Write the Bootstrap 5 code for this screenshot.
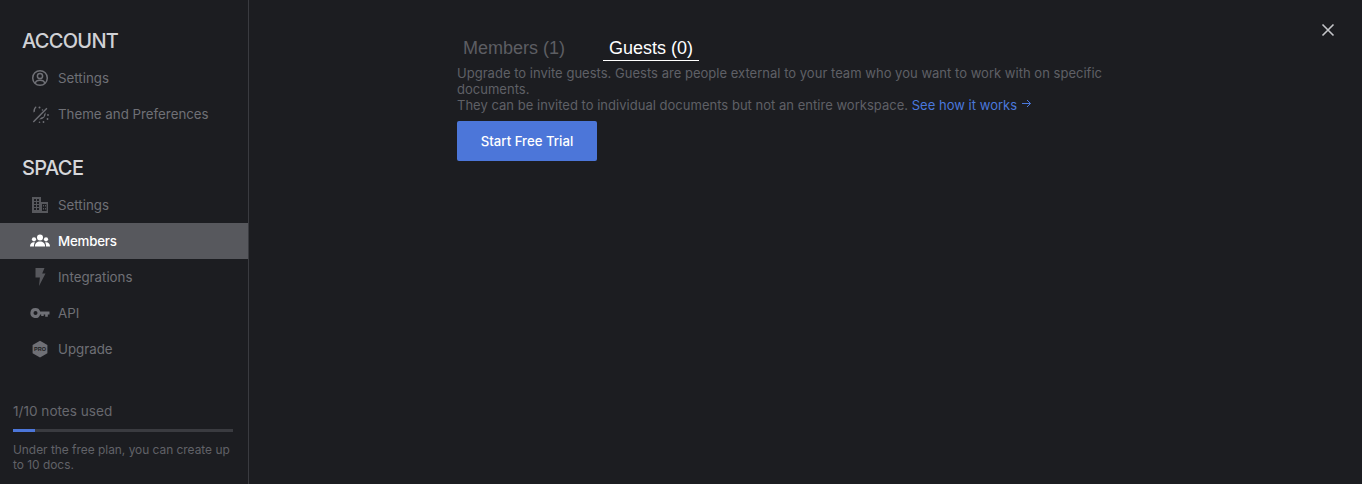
<!DOCTYPE html>
<html lang="en">
<head>
  <meta charset="UTF-8" />
  <meta name="viewport" content="width=device-width, initial-scale=1.0"/>
  <title>Members</title>
  <link href="https://cdn.jsdelivr.net/npm/bootstrap@5.3.0/dist/css/bootstrap.min.css" rel="stylesheet">
  <style>
    html, body { height: 100%; }
    body { background: #1c1d21; font-family: "Inter", "Liberation Sans", sans-serif; overflow: hidden; }
    .shell { height: 484px; }
    .side { width: 249px; flex: none; border-right: 1px solid #3a3b40; height: 484px; padding-top: 28px; }
    .side-title { font-size: 20px; line-height: 26px; font-weight: 500; color: #d0d1d5; padding-left: 22px; margin: 0 0 6px; letter-spacing: -0.7px; }
    .side-title.second { color: #d6d7da; margin-top: 23px; letter-spacing: -0.6px; }
    .side-link { height: 36px; padding-left: 30px; gap: 8px; font-size: 13.3px; color: #6f7076; text-decoration: none; }
    .side-link span { padding-top: 1px; }
    .side-link svg { width: 20px; height: 20px; flex: none; }
    .side-link.active { background: #57585d; color: #fff; font-weight: 500; letter-spacing: -0.2px; }
    .side-foot { margin-top: auto; padding: 0 15px 12px 13px; }
    .used { font-size: 13.6px; line-height: 18px; color: #67686e; margin-bottom: 9px; }
    .used-track { height: 3px; background: #3a3b40; margin-bottom: 10px; }
    .used-fill { height: 3px; background: #4c76d9; }
    .used-note { font-size: 11.9px; line-height: 15px; color: #616268; margin-right: -6px; }
    .pane { padding: 36px 0 0 208px; position: relative; }
    .tabbar { gap: 26px; margin-bottom: 5px; }
    .tab-item { font-family: "Liberation Sans", sans-serif; font-size: 18px; line-height: 24px; padding: 0 6px; color: #5d5e63; }
    .tab-item.active { color: #fff; box-shadow: 0 1px 0 #fff; margin-left: 6px; }
    .guest-text { width: 660px; font-size: 13px; line-height: 16px; color: #5f6066; margin: 0 0 8px; letter-spacing: 0.02px; }
    .guest-text a { color: #4a78dd; text-decoration: none; }
    .trial-btn { width: 140px; height: 40px; background: #4c76d9; color: #fff; font-size: 13.2px; font-weight: 500; border: 0; border-radius: 2px; padding: 1px 0 0; }
    .close-x { position: absolute; top: 23px; right: 27px; width: 14px; height: 14px; }
  </style>
</head>
<body>
  <div class="shell d-flex">
    <!-- Sidebar -->
    <nav class="side d-flex flex-column">
      <h5 class="side-title">ACCOUNT</h5>
      <a href="#" class="side-link d-flex align-items-center">
        <svg viewBox="0 0 20 20" fill="none" stroke="#6f7076" stroke-width="1.5"><circle cx="10" cy="10" r="7.3"/><circle cx="10" cy="8" r="2.6"/><path d="M5.2 15.2c.6-2 2-2.9 4.8-2.9s4.2.9 4.8 2.9"/></svg>
        <span>Settings</span>
      </a>
      <a href="#" class="side-link d-flex align-items-center">
        <svg viewBox="0 0 20 20" fill="#6f7076" stroke="none"><path d="M6.500 3.200a5 5 0 0 0-1.700 4.600l-1.300.8a6.600 6.600 0 0 1 2.400-6.300z"/><path d="M2.800 17.400 16.400 3.800l1 1L3.800 18.400z"/><path d="M15.600 8.200a6.200 6.200 0 0 1-6.400 7.300l2-2 2.400-.8.600-2.500z"/><circle cx="9.500" cy="3.500" r="1"/><circle cx="12.500" cy="6" r=".8"/><circle cx="18" cy="11" r=".9"/><circle cx="17.500" cy="15" r=".9"/><circle cx="13.500" cy="18" r=".9"/><circle cx="9.500" cy="18.200" r=".8"/></svg>
        <span>Theme and Preferences</span>
      </a>
      <h5 class="side-title second">SPACE</h5>
      <a href="#" class="side-link d-flex align-items-center">
        <svg viewBox="0 0 20 20" fill="#57585d"><path fill-rule="evenodd" d="M2 2h9v5h7v11H2zM4 4v2h2V4zm3 0v2h2V4zM4 7v2h2V7zm3 0v2h2V7zm-3 3v2h2v-2zm3 0v2h2v-2zm-3 3v2h2v-2zm3 0v2h2v-2zm5-4v7h4.600V9zm1 1h1v1.500h-1zm2 0h1v1.500h-1zm-2 3h1v1.500h-1zm2 0h1v1.500h-1z"/></svg>
        <span>Settings</span>
      </a>
      <a href="#" class="side-link active d-flex align-items-center">
        <svg viewBox="0 0 20 20" fill="#fff"><circle cx="10" cy="6.500" r="3"/><circle cx="4" cy="8.300" r="2.100"/><circle cx="16" cy="8.300" r="2.100"/><path d="M4.900 15.500c0-3.200 2.200-5 5.100-5s5.100 1.800 5.100 5z"/><path d="M0 15.500c0-2.500 1.400-4.200 3.800-4.200.4 0 .8 0 1.100.1-.7 1-1 2.400-1 4.100zM20 15.500c0-2.500-1.400-4.200-3.800-4.200-.4 0-.8 0-1.100.1.700 1 1 2.400 1 4.100z"/></svg>
        <span>Members</span>
      </a>
      <a href="#" class="side-link d-flex align-items-center">
        <svg viewBox="0 0 20 20" fill="#57585d"><path d="M5.500 1h9l-2.300 5.500h3.300L9 19l.9-8.500H5.500z"/></svg>
        <span>Integrations</span>
      </a>
      <a href="#" class="side-link d-flex align-items-center">
        <svg viewBox="0 0 20 20" fill="#6f7076"><path fill-rule="evenodd" d="M5.500 5a5 5 0 0 1 4.700 3.400h9.300v3h-1.700v2.300h-2.600v-2.300h-1.500v1.500h-2.500v-1.500h-1A5 5 0 1 1 5.500 5zm0 3a2 2 0 1 0 0 4 2 2 0 0 0 0-4z"/></svg>
        <span>API</span>
      </a>
      <a href="#" class="side-link d-flex align-items-center">
        <svg viewBox="0 0 20 20"><path fill="#6f7076" d="M10 1.800 17.400 6v8.200L10 18.400 2.600 14.200V6z"/><text x="10" y="12" text-anchor="middle" font-family="Liberation Sans, sans-serif" font-size="5.500" font-weight="700" fill="#1c1d21">PRO</text></svg>
        <span>Upgrade</span>
      </a>
      <div class="side-foot">
        <div class="used">1/10 notes used</div>
        <div class="used-track"><div class="used-fill" style="width: 10%"></div></div>
        <div class="used-note">Under the free plan, you can create up to 10 docs.</div>
      </div>
    </nav>
    <!-- Main pane -->
    <main class="pane flex-grow-1">
      <a href="#" class="close-x d-block" aria-label="Close">
        <svg class="d-block" width="14" height="14" viewBox="0 0 14 14" fill="none" stroke="#c4c5c9" stroke-width="1.600"><path d="M1.500 1.500l11 11M12.500 1.500l-11 11"/></svg>
      </a>
      <div class="tabbar d-flex">
        <div class="tab-item">Members (1)</div>
        <div class="tab-item active">Guests (0)</div>
      </div>
      <p class="guest-text">Upgrade to invite guests. Guests are people external to your team who you want to work with on specific documents.<br>They can be invited to individual documents but not an entire workspace. <a href="#">See how it works <svg width="11" height="11" viewBox="0 0 11 11" fill="none" stroke="#4a78dd" stroke-width="1" style="vertical-align:1px"><path d="M1 5.500h8.500M6 2l3.500 3.500L6 9"/></svg></a></p>
      <button type="button" class="btn trial-btn">Start Free Trial</button>
    </main>
  </div>
  <script src="https://cdn.jsdelivr.net/npm/bootstrap@5.3.0/dist/js/bootstrap.bundle.min.js"></script>
</body>
</html>
